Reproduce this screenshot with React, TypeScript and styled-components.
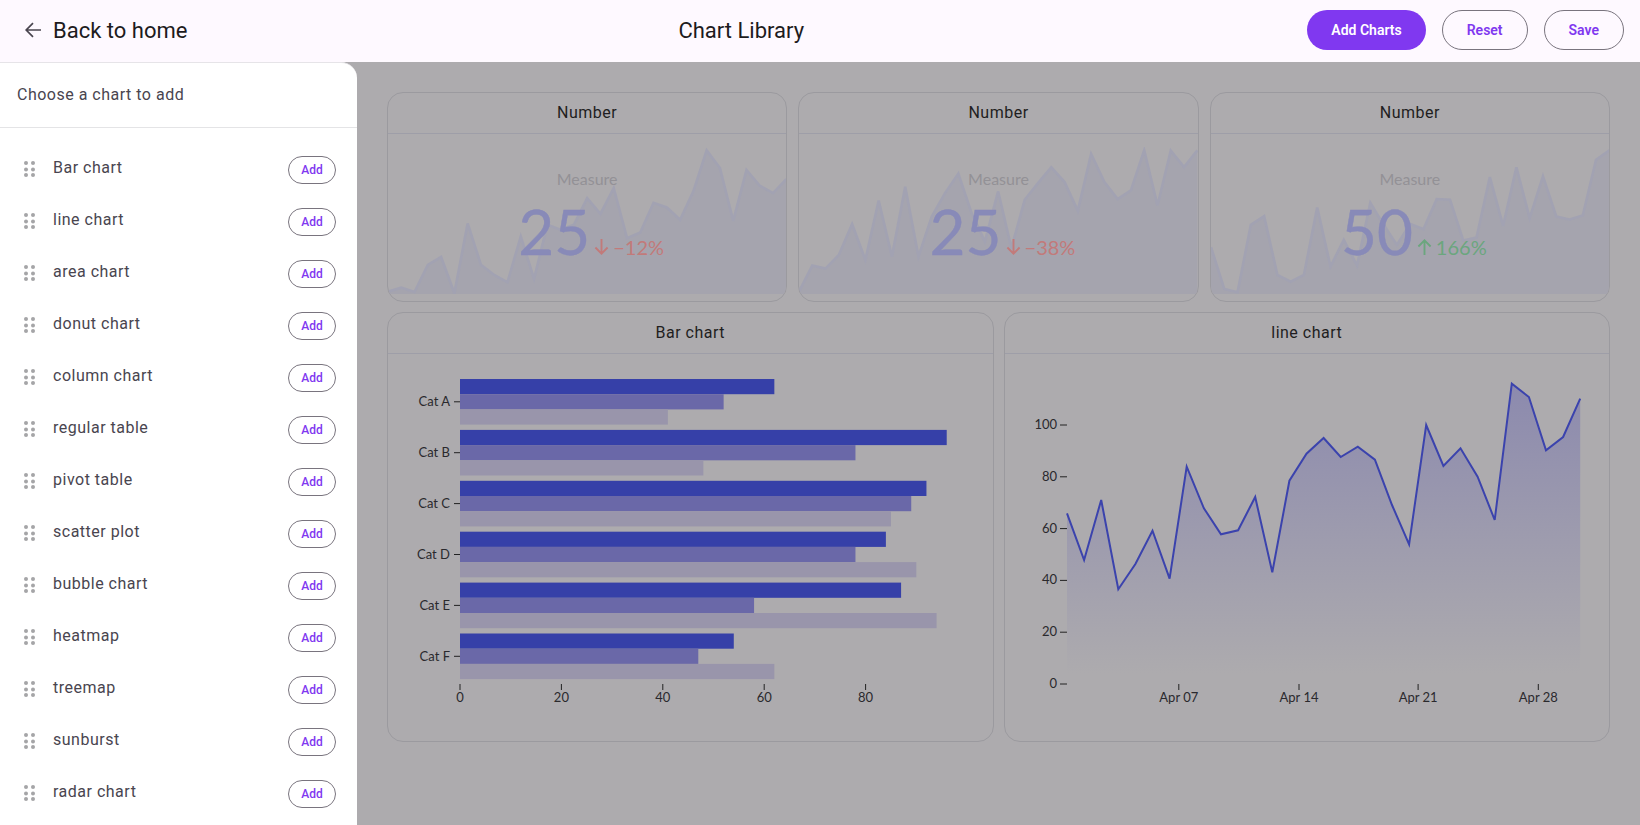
import { createGlobalStyle, styled } from 'styled-components';

const PURPLE = '#8038f0';

const GlobalStyle = createGlobalStyle`
    html, body {
        margin: 0;
        height: 100%;
        overflow: hidden;
        background: #adabae;
    }
    * {
        box-sizing: border-box;
    }
`;

const chartItems = [
    'Bar chart', 'line chart', 'area chart', 'donut chart', 'column chart', 'regular table', 'pivot table',
    'scatter plot', 'bubble chart', 'heatmap', 'treemap', 'sunburst', 'radar chart',
];

const numberCards = [
    {
        value: '25', delta: '−12%', up: false,
        spark: [620, 608, 621, 540, 516, 625, 416, 540, 570, 592, 455, 582, 420, 435, 420, 340, 387, 310, 460, 443, 354, 368, 405, 320, 197, 250, 408, 256, 303, 325, 283],
    },
    {
        value: '25', delta: '−38%', up: false,
        spark: [620, 542, 551, 510, 418, 525, 347, 515, 306, 515, 395, 325, 267, 385, 470, 320, 490, 345, 295, 248, 292, 378, 208, 292, 343, 317, 197, 362, 198, 247, 197],
    },
    {
        value: '50', delta: '166%', up: true,
        spark: [487, 612, 622, 420, 394, 570, 590, 570, 368, 545, 465, 542, 354, 420, 480, 417, 433, 343, 345, 467, 458, 277, 423, 248, 400, 275, 395, 404, 392, 225, 197],
    },
];

const barData = [
    { name: 'Cat A', values: [62, 52, 41] },
    { name: 'Cat B', values: [96, 78, 48] },
    { name: 'Cat C', values: [92, 89, 85] },
    { name: 'Cat D', values: [84, 78, 90] },
    { name: 'Cat E', values: [87, 58, 94] },
    { name: 'Cat F', values: [54, 47, 62] },
];
const barColors = ['#3640a8', '#6a68a8', '#9995ab'];

const lineData = [610, 750, 570, 838, 762, 662, 806, 470, 595, 673, 661, 561, 787, 512, 431, 384, 441, 410, 449, 585, 703, 345, 468, 415, 500, 630, 221, 261, 421, 381, 266];

const Sparkline = ({ points }: { points: number[] }) => {
    const line = points.map((y, i) => `${i * 40},${y}`).join(' ');
    return (
        <SparkSvg viewBox="0 187 1200 440" preserveAspectRatio="none">
            <polygon points={`0,627 ${line} 1200,627`} fill="#a5a4ae" />
            <polyline points={line} fill="none" stroke="#a2a2b2" strokeWidth="8" strokeLinejoin="miter" />
        </SparkSvg>
    );
};

const ArrowIcon = ({ up }: { up: boolean }) => (
    <DeltaIcon viewBox="0 0 16 17" fill="none" stroke="currentColor" strokeWidth="2">
        {up ? <path d="M8 17V2M1.5 8L8 1.5L14.5 8" /> : <path d="M8 0V15M1.5 9L8 15.5L14.5 9" />}
    </DeltaIcon>
);

const GripIcon = () => (
    <GripSvg viewBox="0 0 11 16" fill="#a5a5a7">
        {[2, 8.5, 14].map((y) => (
            <g key={y}>
                <circle cx="2" cy={y} r="2" />
                <circle cx="9" cy={y} r="2" />
            </g>
        ))}
    </GripSvg>
);

const BarChart = () => {
    const x0 = 72;
    const unit = 5.07;
    const step = 50.9;
    return (
        <ChartSvg viewBox="0 0 604.5 387">
            {barData.map((group, g) => (
                <g key={group.name}>
                    {group.values.map((v, b) => (
                        <rect key={b} x={x0} y={25 + g * step + b * 15.2} width={v * unit} height={15.2} fill={barColors[b]} />
                    ))}
                    <line x1={x0 - 6} x2={x0} y1={47.8 + g * step} y2={47.8 + g * step} stroke="#222" />
                    <AxisLabel x={x0 - 10} y={52 + g * step} textAnchor="end">{group.name}</AxisLabel>
                </g>
            ))}
            {[0, 20, 40, 60, 80].map((v) => (
                <g key={v}>
                    <line x1={x0 + v * unit} x2={x0 + v * unit} y1={330} y2={336} stroke="#222" />
                    <AxisLabel x={x0 + v * unit} y={348} textAnchor="middle">{v}</AxisLabel>
                </g>
            ))}
        </ChartSvg>
    );
};

const LineChart = () => {
    const pts = lineData.map((y, i) => `${(62 + i * 17.107).toFixed(1)},${(y / 3 - 44).toFixed(1)}`).join(' ');
    return (
        <ChartSvg viewBox="0 0 604.5 387">
            <defs>
                <linearGradient id="lineFill" gradientUnits="userSpaceOnUse" x1="0" y1="30" x2="0" y2="320">
                    <stop offset="0" stopColor="#8c8aae" />
                    <stop offset="1" stopColor="#adabae" />
                </linearGradient>
            </defs>
            <polygon points={`62,330 ${pts} 575.2,330`} fill="url(#lineFill)" />
            <polyline points={pts} fill="none" stroke="#3b43ad" strokeWidth="2" />
            {[0, 20, 40, 60, 80, 100].map((v) => (
                <g key={v}>
                    <line x1={55} x2={62} y1={330 - v * 2.59} y2={330 - v * 2.59} stroke="#222" />
                    <AxisLabel x={52} y={334 - v * 2.59} textAnchor="end">{v}</AxisLabel>
                </g>
            ))}
            {[['Apr 07', 173.8], ['Apr 14', 294], ['Apr 21', 413.1], ['Apr 28', 533.3]].map(([label, x]) => (
                <g key={label}>
                    <line x1={x} x2={x} y1={330} y2={336} stroke="#222" />
                    <AxisLabel x={x} y={348} textAnchor="middle">{label}</AxisLabel>
                </g>
            ))}
        </ChartSvg>
    );
};

export default function App() {
    return (
        <Page>
            <GlobalStyle />
            <Header>
                <BackLink>
                    <svg width="16" height="16" viewBox="0 0 16 16" fill="none" stroke="#49454f" strokeWidth="1.7">
                        <path d="M16 8H1.5M8 1.2L1.2 8L8 14.8" />
                    </svg>
                    Back to home
                </BackLink>
                <PageTitle>Chart Library</PageTitle>
                <Actions>
                    <HeaderButton $filled>Add Charts</HeaderButton>
                    <HeaderButton>Reset</HeaderButton>
                    <HeaderButton>Save</HeaderButton>
                </Actions>
            </Header>
            <Body>
                <Sidebar>
                    <SidebarTitle>Choose a chart to add</SidebarTitle>
                    <ItemList>
                        {chartItems.map((item) => (
                            <Item key={item}>
                                <GripIcon />
                                <ItemName>{item}</ItemName>
                                <AddButton>Add</AddButton>
                            </Item>
                        ))}
                    </ItemList>
                </Sidebar>
                <Main>
                    <NumberRow>
                        {numberCards.map((card, i) => (
                            <Card key={i}>
                                <CardHeader>Number</CardHeader>
                                <NumberBody>
                                    <Sparkline points={card.spark} />
                                    <MeasureLabel>Measure</MeasureLabel>
                                    <ValueRow>
                                        <Value>{card.value}</Value>
                                        <Delta $up={card.up}>
                                            <ArrowIcon up={card.up} />
                                            {card.delta}
                                        </Delta>
                                    </ValueRow>
                                </NumberBody>
                            </Card>
                        ))}
                    </NumberRow>
                    <ChartRow>
                        <Card>
                            <CardHeader>Bar chart</CardHeader>
                            <BarChart />
                        </Card>
                        <Card>
                            <CardHeader>line chart</CardHeader>
                            <LineChart />
                        </Card>
                    </ChartRow>
                </Main>
            </Body>
        </Page>
    );
}

const Page = styled.div`
    width: 1640px;
    height: 825px;
    display: flex;
    flex-direction: column;
    overflow: hidden;
    font-family: Roboto, sans-serif;
`;

const Header = styled.header`
    flex: 0 0 62px;
    display: flex;
    align-items: center;
    padding: 0 16px 2px 25px;
    background: #fef9ff;
`;

const BackLink = styled.div`
    display: flex;
    align-items: center;
    gap: 12px;
    font-size: 22px;
    color: #1d1b20;
`;

const PageTitle = styled.div`
    margin-left: 491px;
    font-size: 22px;
    color: #1d1b20;
`;

const Actions = styled.div`
    margin-left: auto;
    display: flex;
    gap: 16px;
`;

const HeaderButton = styled.button<{ $filled?: boolean }>`
    height: 40px;
    padding: 0 24px;
    border-radius: 20px;
    border: ${({ $filled }) => ($filled ? 'none' : '1px solid #79747e')};
    background: ${({ $filled }) => ($filled ? PURPLE : 'transparent')};
    color: ${({ $filled }) => ($filled ? '#ffffff' : PURPLE)};
    font-family: Roboto, sans-serif;
    font-size: 14px;
    font-weight: 600;
`;

const Body = styled.div`
    flex: 1;
    display: flex;
    min-height: 0;
`;

const Sidebar = styled.aside`
    flex: 0 0 357px;
    background: #ffffff;
    border-top: 1px solid #e6e4e8;
    border-top-right-radius: 16px;
    overflow: hidden;
`;

const SidebarTitle = styled.div`
    height: 65px;
    padding: 0 0 2px 17px;
    display: flex;
    align-items: center;
    border-bottom: 1px solid #e4e4e6;
    font-size: 16px;
    letter-spacing: 0.5px;
    color: #49454f;
`;

const ItemList = styled.div`
    padding-top: 16px;
`;

const Item = styled.div`
    height: 52px;
    display: flex;
    align-items: center;
    padding: 0 21px 0 24px;
`;

const GripSvg = styled.svg`
    width: 11px;
    height: 16px;
    margin-top: -3px;
    flex: none;
`;

const ItemName = styled.div`
    margin-left: 18px;
    margin-top: -5px;
    flex: 1;
    font-size: 16px;
    letter-spacing: 0.5px;
    color: #49454f;
`;

const AddButton = styled.button`
    width: 48px;
    height: 28px;
    padding: 0;
    border: 1px solid #79747e;
    border-radius: 14px;
    background: transparent;
    color: ${PURPLE};
    font-family: Roboto, sans-serif;
    font-size: 12px;
    font-weight: 500;
`;

const Main = styled.main`
    flex: 1;
    min-width: 0;
    padding: 30px 30px 0;
    display: flex;
    flex-direction: column;
    gap: 10px;
`;

const NumberRow = styled.div`
    display: grid;
    grid-template-columns: repeat(3, 1fr);
    gap: 11px;
    height: 210px;
`;

const ChartRow = styled.div`
    display: grid;
    grid-template-columns: repeat(2, 1fr);
    gap: 10px;
    height: 430px;
`;

const Card = styled.section`
    display: flex;
    flex-direction: column;
    min-width: 0;
    border: 1px solid #9b9a9f;
    border-radius: 16px;
    overflow: hidden;
`;

const CardHeader = styled.div`
    flex: 0 0 41px;
    display: flex;
    align-items: center;
    justify-content: center;
    padding-bottom: 2px;
    border-bottom: 1px solid #9e9ea8;
    font-size: 16px;
    letter-spacing: 0.5px;
    color: #1f1e21;
`;

const NumberBody = styled.div`
    position: relative;
    flex: 1;
    display: flex;
    flex-direction: column;
    align-items: center;
    padding-top: 35px;
    font-family: Lato, sans-serif;
`;

const SparkSvg = styled.svg`
    position: absolute;
    left: 0;
    bottom: 7px;
    width: 100%;
    height: 147px;
`;

const MeasureLabel = styled.div`
    position: relative;
    font-size: 16px;
    line-height: 20px;
    color: #939196;
`;

const ValueRow = styled.div`
    position: relative;
    display: flex;
    align-items: flex-end;
    margin-top: 4px;
    padding-left: 8px;
`;

const Value = styled.div`
    font-size: 62px;
    line-height: 76px;
    color: #888ab8;
    -webkit-text-stroke: 0.4px #888ab8;
`;

const Delta = styled.div<{ $up: boolean }>`
    display: flex;
    align-items: center;
    gap: 4px;
    margin: 0 0 12px 4px;
    font-size: 20px;
    line-height: 20px;
    color: ${({ $up }) => ($up ? '#6ba67e' : '#c27a7a')};
`;

const DeltaIcon = styled.svg`
    width: 15px;
    height: 16px;
`;

const ChartSvg = styled.svg`
    display: block;
    flex: none;
    width: 100%;
    height: 387px;
`;

const AxisLabel = styled.text`
    font-family: Lato, sans-serif;
    font-size: 13px;
    fill: #2a292d;
`;
